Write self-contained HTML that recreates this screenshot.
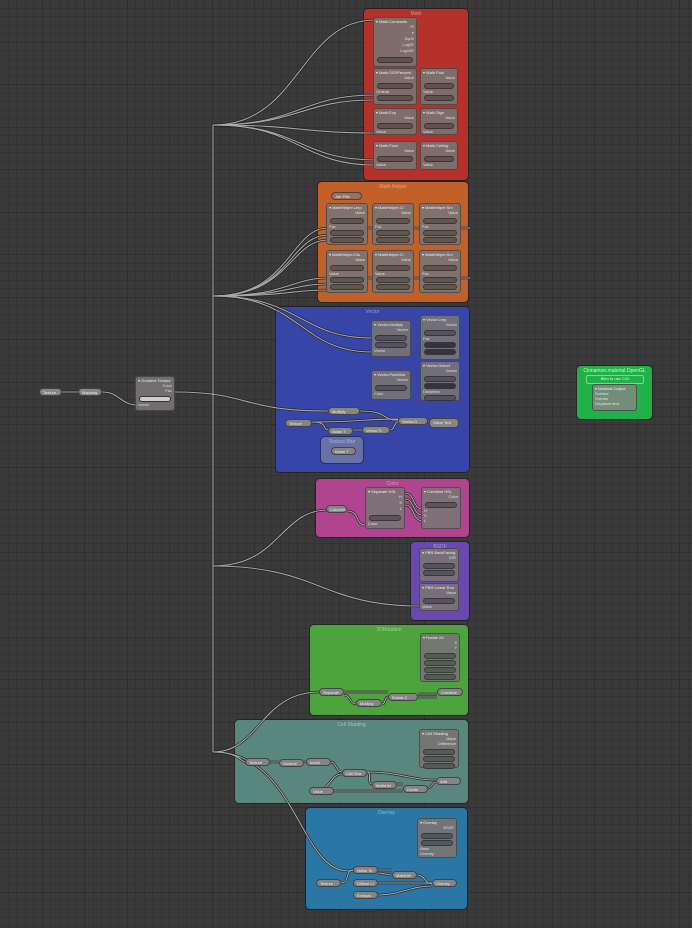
<!DOCTYPE html>
<html><head><meta charset="utf-8"><style>
html,body{margin:0;padding:0}
body{width:692px;height:928px;overflow:hidden;background:#3a3a3a;position:relative;font-family:"Liberation Sans",sans-serif;}
.f{position:absolute;border-radius:4px;box-shadow:0 0 0 1px rgba(0,0,0,.35);}
.f .t{font-size:5px;color:rgba(255,255,255,.45);text-align:center;margin-top:2px}
.n{position:absolute;background:#7a7474;border:1px solid #4a4a4a;border-radius:3px;font-size:4px;color:#eee;box-sizing:border-box;padding:1px 2px;opacity:.9}
.n .h{color:#fff;font-size:4px}
.n .r{height:4px;background:#555;border:1px solid #333;border-radius:3px;margin:3px 1px 0}
.s{position:absolute;background:#858585;border:1px solid #444;border-radius:4px;font-size:4px;color:#eee;box-sizing:border-box;padding:1px 3px;height:8px}
svg{position:absolute;left:0;top:0}
</style></head><body>
<svg width="692" height="928">
<defs>
<pattern id="g" width="8.5" height="8.5" patternUnits="userSpaceOnUse"><path d="M8.5 0V8.5H0" fill="none" stroke="#2f2f2f" stroke-width="1"/></pattern>
<pattern id="G" width="42.5" height="42.5" patternUnits="userSpaceOnUse"><path d="M42.5 0V42.5H0" fill="none" stroke="#262626" stroke-width="1"/></pattern>
</defs>
<rect width="692" height="928" fill="url(#g)"/>
<rect width="692" height="928" fill="url(#G)"/>
</svg>

<div class="f" style="left:364px;top:9px;width:104px;height:171px;background:#b5322b"><div class="t">Math</div></div>
<div class="f" style="left:318px;top:182px;width:150px;height:120px;background:#c2602a"><div class="t">Math Helper</div></div>
<div class="f" style="left:276px;top:307px;width:193px;height:165px;background:#3845a8"><div class="t">Vector</div></div>
<div class="f" style="left:316px;top:479px;width:153px;height:58px;background:#b0448f"><div class="t">Color</div></div>
<div class="f" style="left:411px;top:542px;width:58px;height:78px;background:#6a48b0"><div class="t">BSDF</div></div>
<div class="f" style="left:310px;top:625px;width:158px;height:90px;background:#4ea43c"><div class="t">2DRotation</div></div>
<div class="f" style="left:235px;top:720px;width:233px;height:83px;background:#5a877d"><div class="t">Cell Shading</div></div>
<div class="f" style="left:306px;top:808px;width:161px;height:101px;background:#2a77a6"><div class="t">Overlay</div></div>
<div class="f" style="left:577px;top:366px;width:75px;height:53px;background:#22b04a"><div class="t" style="color:#cfc">Cinnamon.material.OpenGL</div>
<div style="position:absolute;left:9px;top:9px;width:56px;height:7px;border:1px solid #7d7;border-radius:2px;font-size:4px;color:#dfd;text-align:center">Bitm to use C02</div></div>
<div class="f" style="left:321px;top:437px;width:42px;height:26px;background:#6870a8"><div class="t">Texture Blur</div></div>

<svg width="692" height="928" fill="none">
<defs>
<g id="w">
<path d="M213 125V752"/>
<path d="M62 392H78M102 392C120 392 120 405 138 405"/>
<path d="M175 392C250 392 240 411 328 411"/>
<path d="M213 125C300 125 300 20 375 20"/><path d="M213 125C300 125 300 95 375 95"/><path d="M213 125C300 125 300 100 375 100"/><path d="M213 125C300 125 300 133 375 133"/><path d="M213 125C300 125 300 165 375 165"/><path d="M213 125C300 125 300 160 375 160"/>
<path d="M213 296C290 296 290 228 328 228"/><path d="M213 296C290 296 290 235 328 235"/><path d="M213 296C290 296 290 240 328 240"/><path d="M213 296C290 296 290 278 328 278"/><path d="M213 296C290 296 290 284 328 284"/><path d="M213 296C290 296 290 290 328 290"/><path d="M213 296C300 296 300 338 372 338"/><path d="M213 296C300 296 300 352 372 352"/>
<path d="M213 566C280 566 280 510 328 510"/><path d="M213 566C320 566 320 606 420 606"/>
<path d="M213 752C260 752 260 692 320 692"/><path d="M213 752C240 752 240 762 246 762"/><path d="M213 752C300 752 300 883 355 870"/>
<path d="M328 228H470M328 278H470M347 511C360 511 355 525 365 525M405 493C415 493 412 509 423 509M405 499C415 499 412 515 423 515M405 505C415 505 412 521 423 521"/>
<path d="M312 422C330 422 320 430 330 430M312 422C360 422 360 419 398 419M353 430H362M390 430C395 430 394 421 400 421M428 421H431M359 411C390 411 380 420 398 420"/>
<path d="M344 692H388M344 695C350 695 350 704 356 704M382 704C386 704 384 697 388 697M418 697H437M418 694H437"/>
<path d="M270 762H279M304 762H306M331 762C336 762 336 772 342 772M367 772C372 772 367 784 372 784M367 772C400 772 410 780 436 780M397 784H403M428 788C432 788 432 782 436 782M334 791H403M316 791C330 791 330 774 342 774"/>
<path d="M341 883C350 883 345 870 353 870M378 870H392M378 873C384 873 386 875 392 875M417 875C425 875 425 884 432 884M378 883H432M378 895C400 895 410 886 432 886"/>
</g>
</defs>
<use href="#w" stroke="#1e1e1e" stroke-width="2.4"/>
<use href="#w" stroke="#a9a9a9" stroke-width="1.1"/>
</svg>

<div class="n" style="left:373px;top:17px;width:44px;height:50px"><div class="h">▾ Math.Constants</div><div style="text-align:right;line-height:6px">Pi<br>e<br>Sqrt2<br>Log2E<br>Log10E</div><div class="r"></div></div>
<div class="n" style="left:373px;top:68px;width:44px;height:37px"><div class="h">▾ Math.SSSPercent</div><div style="text-align:right">Value</div><div class="r"></div><div>Ordinal</div><div class="r" style="margin-top:1px"></div></div>
<div class="n" style="left:420px;top:68px;width:38px;height:37px"><div class="h">▾ Math.Pool</div><div style="text-align:right">Value</div><div class="r"></div><div>Value</div><div class="r" style="margin-top:1px"></div></div>
<div class="n" style="left:373px;top:108px;width:44px;height:27px"><div class="h">▾ Math.Exp</div><div style="text-align:right">Value</div><div class="r"></div><div>Value</div></div>
<div class="n" style="left:420px;top:108px;width:38px;height:27px"><div class="h">▾ Math.Sign</div><div style="text-align:right">Value</div><div class="r"></div><div>Value</div></div>
<div class="n" style="left:373px;top:141px;width:44px;height:29px"><div class="h">▾ Math.Floor</div><div style="text-align:right">Value</div><div class="r"></div><div>Value</div></div>
<div class="n" style="left:420px;top:141px;width:38px;height:29px"><div class="h">▾ Math.Ceiling</div><div style="text-align:right">Value</div><div class="r"></div><div>Value</div></div>

<div class="s" style="left:331px;top:192px;width:31px;background:#9a7060">Jab Pills</div>
<div class="n" style="left:326px;top:203px;width:42px;height:42px"><div class="h">▾ MathHelper.Lerp</div><div style="text-align:right">Value</div><div class="r"></div><div>Fac</div><div class="r" style="margin-top:1px"></div><div class="r" style="margin-top:1px"></div></div>
<div class="n" style="left:372px;top:203px;width:42px;height:42px"><div class="h">▾ MathHelper.Cl</div><div style="text-align:right">Value</div><div class="r"></div><div>Fac</div><div class="r" style="margin-top:1px"></div><div class="r" style="margin-top:1px"></div></div>
<div class="n" style="left:419px;top:203px;width:42px;height:42px"><div class="h">▾ MathHelper.Sm</div><div style="text-align:right">Value</div><div class="r"></div><div>Fac</div><div class="r" style="margin-top:1px"></div><div class="r" style="margin-top:1px"></div></div>
<div class="n" style="left:326px;top:250px;width:42px;height:43px"><div class="h">▾ MathHelper.Cla</div><div style="text-align:right">Value</div><div class="r"></div><div>Value</div><div class="r" style="margin-top:1px"></div><div class="r" style="margin-top:1px"></div></div>
<div class="n" style="left:372px;top:250px;width:42px;height:43px"><div class="h">▾ MathHelper.Cl</div><div style="text-align:right">Value</div><div class="r"></div><div>Value</div><div class="r" style="margin-top:1px"></div><div class="r" style="margin-top:1px"></div></div>
<div class="n" style="left:419px;top:250px;width:42px;height:43px"><div class="h">▾ MathHelper.Sm</div><div style="text-align:right">Value</div><div class="r"></div><div>Fac</div><div class="r" style="margin-top:1px"></div><div class="r" style="margin-top:1px"></div></div>

<div class="n" style="left:371px;top:320px;width:40px;height:37px"><div class="h">▾ Vector.Multiply</div><div style="text-align:right">Vector</div><div class="r"></div><div class="r" style="margin-top:1px"></div><div>Vector</div></div>
<div class="n" style="left:420px;top:315px;width:40px;height:45px"><div class="h">▾ Vector.Lerp</div><div style="text-align:right">Vector</div><div class="r"></div><div>Fac</div><div class="r" style="margin-top:1px;background:#333"></div><div class="r" style="margin-top:1px;background:#333"></div></div>
<div class="n" style="left:371px;top:370px;width:40px;height:30px"><div class="h">▾ Vector.PointDist</div><div style="text-align:right">Vector</div><div class="r"></div><div>Color</div></div>
<div class="n" style="left:420px;top:361px;width:40px;height:40px"><div class="h">▾ Vector.Distort</div><div style="text-align:right">Vector</div><div class="r"></div><div class="r" style="margin-top:1px;background:#333"></div><div>Distortion</div><div class="r" style="margin-top:1px"></div></div>
<div class="s" style="left:328px;top:407px;width:32px">Multiply</div>
<div class="s" style="left:285px;top:419px;width:27px">Texture</div>
<div class="s" style="left:328px;top:427px;width:25px">Noise T</div>
<div class="s" style="left:362px;top:426px;width:28px">Vector.Tr</div>
<div class="s" style="left:398px;top:417px;width:30px">Vector.D</div>
<div class="s" style="left:429px;top:418px;width:30px;height:10px">Value Text</div>
<div class="s" style="left:331px;top:447px;width:25px">Noise T</div>

<div class="s" style="left:326px;top:505px;width:21px">ColorMix</div>
<div class="n" style="left:365px;top:487px;width:40px;height:42px"><div class="h">▾ Separate HSL</div><div style="text-align:right;line-height:6px">H<br>S<br>L</div><div class="r"></div><div>Color</div></div>
<div class="n" style="left:421px;top:487px;width:40px;height:42px"><div class="h">▾ Combine HSL</div><div style="text-align:right">Color</div><div class="r"></div><div style="line-height:5px">H<br>S<br>L</div></div>

<div class="n" style="left:419px;top:548px;width:40px;height:34px"><div class="h">▾ PBR.BackFacing</div><div style="text-align:right">IOR</div><div class="r"></div><div class="r" style="margin-top:1px"></div></div>
<div class="n" style="left:419px;top:583px;width:40px;height:28px"><div class="h">▾ PBR.Linear Rou</div><div style="text-align:right">Value</div><div class="r"></div><div>Value</div></div>

<div class="n" style="left:420px;top:633px;width:40px;height:49px"><div class="h">▾ Rotate 2d</div><div style="text-align:right;line-height:5px">X<br>Y</div><div class="r"></div><div class="r" style="margin-top:1px"></div><div class="r" style="margin-top:1px"></div><div class="r" style="margin-top:1px"></div></div>
<div class="s" style="left:319px;top:688px;width:25px">Separate</div>
<div class="s" style="left:356px;top:699px;width:26px">Multiply</div>
<div class="s" style="left:388px;top:693px;width:30px">Rotate 2</div>
<div class="s" style="left:437px;top:688px;width:26px">Combine</div>

<div class="n" style="left:419px;top:729px;width:40px;height:39px"><div class="h">▾ Cell Shading</div><div style="text-align:right;line-height:5px">Value<br>Difference</div><div class="r"></div><div class="r" style="margin-top:1px"></div><div class="r" style="margin-top:1px"></div></div>
<div class="s" style="left:245px;top:758px;width:25px">Texture</div>
<div class="s" style="left:279px;top:759px;width:25px">Voronoi</div>
<div class="s" style="left:306px;top:758px;width:25px">Invert</div>
<div class="s" style="left:342px;top:769px;width:25px">Cell Sha</div>
<div class="s" style="left:372px;top:781px;width:25px">MathHel</div>
<div class="s" style="left:403px;top:785px;width:25px">Divide</div>
<div class="s" style="left:436px;top:777px;width:25px">Add</div>
<div class="s" style="left:309px;top:787px;width:25px">Value</div>

<div class="n" style="left:417px;top:818px;width:40px;height:40px"><div class="h">▾ Overlay</div><div style="text-align:right">BSDF</div><div class="r"></div><div class="r" style="margin-top:1px"></div><div style="line-height:5px">Base<br>Overlay</div></div>
<div class="s" style="left:316px;top:879px;width:25px">Texture</div>
<div class="s" style="left:353px;top:866px;width:25px">Noise Te</div>
<div class="s" style="left:392px;top:871px;width:25px">MathHel</div>
<div class="s" style="left:353px;top:879px;width:25px">Diffuse Li</div>
<div class="s" style="left:432px;top:879px;width:25px">Overlay</div>
<div class="s" style="left:353px;top:891px;width:25px">Emissio</div>

<div class="n" style="left:592px;top:384px;width:45px;height:27px;background:#7d8a7d"><div class="h">▾ Material Output</div><div style="line-height:5px">Surface<br>Volume<br>Displacement</div></div>

<div class="s" style="left:39px;top:388px;width:23px;height:8px">Texture</div>
<div class="s" style="left:78px;top:388px;width:24px;height:8px">Mapping</div>
<div class="n" style="left:135px;top:376px;width:40px;height:35px"><div class="h">▾ Gradient Texture</div><div style="text-align:right;line-height:5px">Color<br>Fac</div><div class="r" style="background:#ddd"></div><div>Vector</div></div>
</body></html>
